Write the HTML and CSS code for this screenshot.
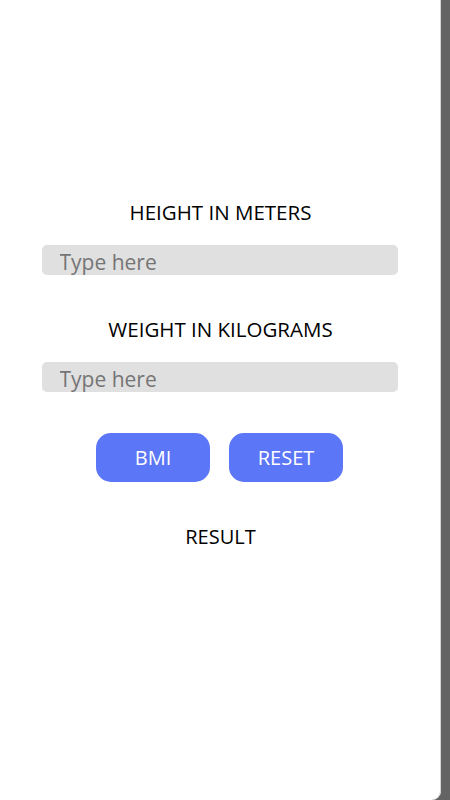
FILE: index.html
```html
<!DOCTYPE html>
<html lang="en">
<head>
<meta charset="utf-8">
<title>BMI Calculator</title>
<link rel="stylesheet" href="styles.css">
</head>
<body>
<main class="screen">
  <label class="label" for="height">HEIGHT IN METERS</label>
  <input class="field" id="height" type="text" placeholder="Type here">
  <label class="label label-second" for="weight">WEIGHT IN KILOGRAMS</label>
  <input class="field" id="weight" type="text" placeholder="Type here">
  <div class="actions">
    <button class="btn" type="button">BMI</button>
    <button class="btn" type="button">RESET</button>
  </div>
  <p class="result">RESULT</p>
</main>
</body>
</html>
```

FILE: styles.css
```css
* { box-sizing: border-box; }

html, body {
  margin: 0;
  height: 100%;
}

body {
  background: #646464;
  font-family: "Open Sans", "Noto Sans", sans-serif;
  overflow: hidden;
}

.screen {
  width: 441px;
  height: 800px;
  background: #ffffff;
  border-bottom-right-radius: 9px;
  box-shadow: inset -1px 0 0 #d6d6d6;
  display: flex;
  flex-direction: column;
  align-items: center;
  padding-top: 200px;
}

.label {
  display: block;
  font-size: 20.5px;
  line-height: 24px;
  color: #000;
}

.label-second {
  margin-top: 42px;
}

.field {
  width: 356px;
  height: 30px;
  margin-top: 21px;
  margin-right: 2px;
  border: none;
  border-radius: 5px;
  background: #e0e0e0;
  padding: 3px 0 0 18px;
  font-family: inherit;
  font-size: 21px;
  color: #333;
  outline: none;
}

.field::placeholder {
  color: #757575;
}

.actions {
  display: flex;
  gap: 19px;
  margin-top: 41px;
  margin-right: 2px;
}

.btn {
  width: 114px;
  height: 49px;
  border: none;
  border-radius: 15px;
  background: #5b76f7;
  color: #ffffff;
  font-family: inherit;
  font-size: 20px;
  padding: 0;
}

.result {
  margin: 43px 0 0;
  font-size: 20px;
  line-height: 24px;
  color: #000;
}
```
